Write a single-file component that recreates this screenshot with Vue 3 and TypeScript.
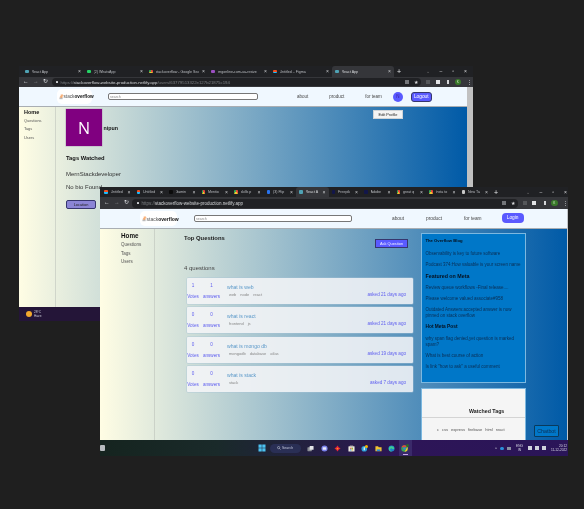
<template>
  <div class="desktop">
    <!-- back window: profile page -->
    <section class="window back">
      <div class="tabstrip">
        <div v-for="tab in backTabs" :key="tab.id" :class="['tab', { active: tab.active }]" :style="{ width: tab.width + 'px' }">
          <i class="favicon" :style="{ background: tab.color }"></i>
          <span class="tab-title">{{ tab.title }}</span>
          <span class="tab-close">×</span>
        </div>
        <span class="tab-plus">+</span>
        <div class="win-controls">
          <span>⌄</span><span>–</span><span>▫</span><span>×</span>
        </div>
      </div>
      <div class="toolbar">
        <div class="nav-btns"><span>←</span><span class="dim">→</span><span>↻</span></div>
        <div class="address">
          <i class="lock"></i>
          <span class="scheme">https://</span><span class="host">stackoverflow-website-production.netlify.app</span><span class="scheme">/users/63779513322e127b21875c194</span>
          <div class="addr-icons"><i class="mini share"></i><span class="star">★</span></div>
        </div>
        <div class="ext-icons">
          <i class="mini dark"></i><i class="mini puzzle"></i><i class="mini panel"></i><i class="profile">K</i><span class="dots">⋮</span>
        </div>
      </div>
      <div class="page">
        <header class="site-header">
          <div class="logo">
            <svg viewBox="0 0 10 14" class="logo-mark"><path d="M1 9h7v4H1z" fill="#bcbbbb" /><path d="M2 8l5 1M2.6 6l5 2M4 3.6l4.4 3M6 1.6l3.4 4.4" stroke="#f48024" stroke-width="1.4" /></svg>
            <span>stack<b>overflow</b></span>
          </div>
          <input class="search" placeholder="search" />
          <nav class="site-nav"><a>about</a><a>product</a><a>for team</a></nav>
          <span class="avatar-mini">N</span>
          <button class="auth-btn logout">Logout</button>
        </header>
        <div class="content">
          <aside class="side">
            <strong>Home</strong>
            <a>Questions</a><a>Tags</a><a>Users</a>
          </aside>
          <main class="profile-main">
            <div class="profile-top">
              <div class="avatar">N</div>
              <b class="username">nipun</b>
              <button class="edit-btn">Edit Profile</button>
            </div>
            <h4>Tags Watched</h4>
            <p class="tag-name">MernStackdeveloper</p>
            <p class="bio">No bio Found</p>
            <button class="location-btn">Location</button>
          </main>
        </div>
      </div>
      <div class="scrollbar"></div>
    </section>
    <div class="back-taskbar">
      <i class="sun"></i>
      <div class="weather"><span>28°C</span><span>Haze</span></div>
    </div>

    <!-- front window: questions page -->
    <section class="window front">
      <div class="tabstrip">
        <div v-for="tab in frontTabs" :key="tab.id" :class="['tab', { active: tab.active }]" :style="{ width: '32.5px' }">
          <i class="favicon" :style="{ background: tab.color }"></i>
          <span class="tab-title">{{ tab.title }}</span>
          <span class="tab-close">×</span>
        </div>
        <span class="tab-plus">+</span>
        <div class="win-controls">
          <span>⌄</span><span>–</span><span>▫</span><span>×</span>
        </div>
      </div>
      <div class="toolbar">
        <div class="nav-btns"><span>←</span><span class="dim">→</span><span>↻</span></div>
        <div class="address">
          <i class="lock"></i>
          <span class="scheme">https://</span><span class="host">stackoverflow-website-production.netlify.app</span>
          <div class="addr-icons"><i class="mini share"></i><span class="star">★</span></div>
        </div>
        <div class="ext-icons">
          <i class="mini dark"></i><i class="mini puzzle"></i><i class="mini panel"></i><i class="profile">K</i><span class="dots">⋮</span>
        </div>
      </div>
      <div class="page">
        <header class="site-header">
          <div class="logo">
            <svg viewBox="0 0 10 14" class="logo-mark"><path d="M1 9h7v4H1z" fill="#bcbbbb" /><path d="M2 8l5 1M2.6 6l5 2M4 3.6l4.4 3M6 1.6l3.4 4.4" stroke="#f48024" stroke-width="1.4" /></svg>
            <span>stack<b>overflow</b></span>
          </div>
          <input class="search" placeholder="search" />
          <nav class="site-nav"><a>about</a><a>product</a><a>for team</a></nav>
          <button class="auth-btn login">Login</button>
        </header>
        <div class="content">
          <aside class="side">
            <strong>Home</strong>
            <a>Questions</a><a>Tags</a><a>Users</a>
          </aside>
          <main class="questions">
            <div class="q-head">
              <h3>Top Questions</h3>
              <button class="ask-btn">Ask Question</button>
            </div>
            <p class="q-count">4 questions</p>
            <div v-for="q in questions" :key="q.title" class="q-card">
              <div class="q-stat"><span>{{ q.votes }}</span><span>Votes</span></div>
              <div class="q-stat answers"><span>{{ q.answers }}</span><span>answers</span></div>
              <div class="q-body">
                <a class="q-title">{{ q.title }}</a>
                <div class="q-foot">
                  <div class="q-tags"><span v-for="t in q.tags" :key="t">{{ t }}</span></div>
                  <span class="q-asked">asked {{ q.asked }} days ago</span>
                </div>
              </div>
            </div>
          </main>
          <aside class="right-col">
            <div class="blog">
              <b class="blog-first">The Overflow Blog</b>
              <p>Observability is key to future software</p>
              <p>Podcast 374:How valuable is your screen name</p>
              <h5>Featured on Meta</h5>
              <p>Review queue workflows -Final release....</p>
              <p>Please welcome valued associate#958</p>
              <p>Outdated Answers:accepted answer is now pinned on stack overflow</p>
              <b class="blog-hot">Hot Meta Post</b>
              <p>why span flag denied,yet question is marked spam?</p>
              <p>What is best course of action</p>
              <p>Is link "how to ask" a useful comment</p>
            </div>
            <div class="watched">
              <h4>Watched Tags</h4>
              <div class="watched-tags"><span v-for="t in watchedTags" :key="t">{{ t }}</span></div>
            </div>
          </aside>
        </div>
        <button class="chatbot">Chatbot</button>
      </div>
      <div class="taskbar">
        <i class="widget-icon"></i>
        <div class="task-center">
          <svg viewBox="0 0 16 16" class="win-logo"><path d="M1 1h6.500v6.500H1zM8.500 1H15v6.500H8.500zM1 8.500h6.500V15H1zM8.500 8.500H15V15H8.500z" fill="#4cc2f1" /></svg>
          <div class="task-search"><svg viewBox="0 0 10 10"><circle cx="4" cy="4" r="2.800" fill="none" stroke="#dfe3ee" stroke-width="1.200" /><path d="M6 6l3 3" stroke="#dfe3ee" stroke-width="1.200" /></svg><span>Search</span></div>
          <!-- task view -->
          <svg viewBox="0 0 16 16" class="task-app"><rect x="1" y="5" width="10" height="9" rx="1" fill="#8c8f96" /><rect x="6" y="2" width="9" height="9" rx="1" fill="#e4e5e8" /></svg>
          <!-- chat -->
          <svg viewBox="0 0 16 16" class="task-app"><circle cx="8" cy="8" r="7" fill="#7b83eb" /><rect x="4" y="5" width="8" height="6" rx="1.500" fill="#e8e9fb" /></svg>
          <!-- red app -->
          <svg viewBox="0 0 16 16" class="task-app"><path d="M8 1l3 4 4 3-4 3-3 4-3-4-4-3 4-3z" fill="#e8223a" /><circle cx="8" cy="8" r="2" fill="#f7a21b" /></svg>
          <!-- store -->
          <svg viewBox="0 0 16 16" class="task-app"><rect x="1" y="3" width="14" height="12" rx="1" fill="#ece9df" /><path d="M5 1.500h6V4H5z" fill="none" stroke="#c8c4b6" /><path d="M5 6h3v3H5z" fill="#e8553c" /><path d="M8.500 6h3v3h-3z" fill="#7cb342" /><path d="M5 9.500h3v3H5z" fill="#2b9fd8" /><path d="M8.500 9.500h3v3h-3z" fill="#f4c430" /></svg>
          <!-- browser with badge -->
          <svg viewBox="0 0 16 16" class="task-app"><circle cx="7.500" cy="8.500" r="6.500" fill="#2b9fd8" /><path d="M6 5h3v7H6z" fill="#dff1fa" /><circle cx="12.500" cy="3.500" r="3.500" fill="#f4b400" /></svg>
          <!-- folder -->
          <svg viewBox="0 0 16 16" class="task-app"><path d="M1 3h6l1.500 2H15v9H1z" fill="#f4c430" /><path d="M4 10h8v4H4z" fill="#2f8fd0" /></svg>
          <!-- edge -->
          <svg viewBox="0 0 16 16" class="task-app"><circle cx="8" cy="8" r="7" fill="#1d84c9" /><path d="M2 10a6 6 0 0 1 12-2c0 2-5 2-5 0a3 3 0 0 0-4 4 5 5 0 0 0 5 3 7 7 0 0 1-8-5z" fill="#3fd08f" /></svg>
          <div class="chrome-app">
            <svg viewBox="0 0 16 16"><circle cx="7" cy="9" r="6.500" fill="#34a853" /><path d="M7 2.500A6.500 6.500 0 0 1 12.600 5.800H7A3.200 3.200 0 0 0 4.200 7.600L1.600 5.400A6.500 6.500 0 0 1 7 2.500z" fill="#e8453c" /><path d="M12.600 5.800A6.500 6.500 0 0 1 7 15.500l2.800-4.900 2.800-4.800z" fill="#f4c430" /><circle cx="7" cy="9" r="2.600" fill="#3f7fd8" /><circle cx="13" cy="3" r="3" fill="#2f6a2a" /></svg>
            <i class="running"></i>
          </div>
        </div>
        <div class="tray">
          <span class="tray-chev">^</span>
          <i class="tray-cloud"></i><i class="tray-drive"></i>
          <div class="tray-lang"><span>ENG</span><span>IN</span></div>
          <i class="tray-ico"></i><i class="tray-ico"></i><i class="tray-ico"></i>
          <div class="tray-clock"><span>20:12</span><span>11-12-2022</span></div>
        </div>
      </div>
    </section>
  </div>
</template>

<script setup lang="ts">
const chromeIcon = 'conic-gradient(#e8453c 0 33%, #f4c430 33% 66%, #34a853 66%)'

const backTabs = [
  { id: 1, title: 'React App', color: '#4fa3b5', width: 62, active: false },
  { id: 2, title: '(2) WhatsApp', color: '#25d366', width: 62, active: false },
  { id: 3, title: 'stackoverflow - Google Sea', color: chromeIcon, width: 62, active: false },
  { id: 4, title: 'imgonline-com-ua-resize', color: '#9b4fc2', width: 62, active: false },
  { id: 5, title: 'Untitled – Figma', color: 'linear-gradient(#f24e1e 50%, #1abcfe 50%)', width: 62, active: false },
  { id: 6, title: 'React App', color: '#4fa3b5', width: 62, active: true },
]

const frontTabs = [
  { id: 1, title: 'Untitled', color: 'linear-gradient(#f24e1e 50%, #1abcfe 50%)', active: false },
  { id: 2, title: 'Untitled', color: 'linear-gradient(#f24e1e 50%, #1abcfe 50%)', active: false },
  { id: 3, title: 'Gamin', color: '#0b0b0b', active: false },
  { id: 4, title: 'Mentio', color: chromeIcon, active: false },
  { id: 5, title: 'skills p', color: chromeIcon, active: false },
  { id: 6, title: '(3) Flip', color: '#2874f0', active: false },
  { id: 7, title: 'React A', color: '#4fa3b5', active: true },
  { id: 8, title: 'Freepik', color: '#12164a', active: false },
  { id: 9, title: 'Adobe', color: '#12164a', active: false },
  { id: 10, title: 'great q', color: chromeIcon, active: false },
  { id: 11, title: 'Insta to', color: chromeIcon, active: false },
  { id: 12, title: 'New Ta', color: '#c8c8c8', active: false },
]

const questions = [
  { title: 'what is web', votes: 1, answers: 1, tags: ['web', 'node', 'react'], asked: 21 },
  { title: 'what is react', votes: 0, answers: 0, tags: ['frontend', 'js'], asked: 21 },
  { title: 'what is mongo db', votes: 0, answers: 0, tags: ['mongodb', 'database', 'atlas'], asked: 19 },
  { title: 'what is stack', votes: 0, answers: 0, tags: ['stack'], asked: 7 },
]

const watchedTags = ['c', 'css', 'express', 'firebase', 'html', 'react']
</script>

<style>
html, body { margin: 0; background: #1f1f1f; }
</style>

<style scoped>
.desktop { position: relative; width: 584px; height: 509px; background: #1f1f1f; overflow: hidden; font-family: "Liberation Sans", Arial, sans-serif; color: #222; filter: blur(0.3px); }
.window { position: absolute; display: flex; flex-direction: column; overflow: hidden; }
.back { left: 19px; top: 66px; width: 454px; height: 241px; }
.front { left: 100px; top: 187px; width: 468px; height: 269px; }

/* browser chrome */
.tabstrip { display: flex; align-items: flex-end; height: 11px; background: #202124; padding-left: 3px; flex: none; }
.front .tabstrip { height: 10px; padding-left: 1px; }
.tab { display: flex; align-items: center; gap: 3px; height: 100%; padding: 0 3px; box-sizing: border-box; font-size: 3.600px; color: #b9bcc0; }
.tab.active { background: #35363a; border-radius: 3px 3px 0 0; color: #d5d7da; }
.favicon { width: 3.500px; height: 3.500px; border-radius: 1px; flex: none; }
.tab-title { flex: 1; white-space: nowrap; overflow: hidden; }
.tab-close { font-size: 5px; line-height: 1; color: #c8cacd; }
.tab-plus { margin-left: 3px; align-self: center; color: #e8eaed; font-size: 7px; line-height: 1; }
.win-controls { margin-left: auto; display: flex; align-self: center; gap: 10px; padding-right: 6px; color: #d8d9db; font-size: 5px; line-height: 1; }
.front .win-controls { padding-right: 1px; }
.win-controls span:first-child { color: #777; }
.toolbar { display: flex; align-items: center; height: 10px; background: #35363a; flex: none; }
.front .toolbar { height: 12px; }
.nav-btns { display: flex; gap: 4.500px; padding-left: 4px; color: #dfe1e4; font-size: 5.500px; line-height: 1; }
.nav-btns .dim { color: #85878a; }
.address { display: flex; align-items: center; margin-left: 4px; width: 369px; height: 7.500px; border-radius: 4px; background: #202124; font-size: 4.300px; white-space: nowrap; padding-left: 4px; box-sizing: border-box; }
.front .address { width: 390px; margin-left: 3px; height: 9px; padding-left: 5px; font-size: 4.500px; }
.lock { width: 2px; height: 2.500px; background: #cfd1d4; margin-right: 2.500px; border-radius: 0.500px; }
.scheme { color: #7d8084; }
.host { color: #d5d7da; }
.addr-icons { margin-left: auto; display: flex; align-items: center; gap: 5px; padding-right: 3px; }
.star { color: #d8d9db; font-size: 5px; line-height: 1; }
.mini { display: block; width: 4px; height: 4px; background: #7b7d80; }
.mini.share { background: #74767a; }
.mini.dark { background: #55575a; }
.mini.puzzle { background: #e3e4e6; }
.mini.panel { background: #d5d6d8; box-shadow: inset 2px 0 0 #35363a; }
.ext-icons { display: flex; align-items: center; gap: 5.500px; margin-left: 5px; }
.profile { display: flex; align-items: center; justify-content: center; width: 6.500px; height: 6.500px; border-radius: 50%; background: #3a7a2a; color: #cfe8c6; font-size: 3px; font-style: normal; }
.dots { color: #d8d9db; font-size: 5px; line-height: 1; }

/* site */
.page { position: relative; flex: 1; display: flex; flex-direction: column; min-height: 0; background: linear-gradient(to right, #fffde4, #005aa7); }
.back .page { margin-right: 6px; }
.front .page { border-right: 1px solid #c4c6c9; }
.scrollbar { position: absolute; right: 0; top: 21px; bottom: 0; width: 6px; background: #c1c1c1; }
.site-header { display: flex; align-items: center; height: 19px; background: #f0f8ff; border-bottom: 1px solid #a9aeb3; flex: none; box-sizing: content-box; }
.back .site-header { padding-left: 38px; }
.front .site-header { height: 19px; padding-left: 40px; }
.logo { display: flex; align-items: center; background: #fff; border-radius: 5px; height: 15px; width: 35px; padding-left: 2px; box-sizing: border-box; font-size: 4.700px; color: #555; }
.front .logo { width: 37px; font-size: 5px; }
.logo b { color: #111; font-weight: 700; }
.logo-mark { width: 4.500px; height: 7px; flex: none; }
.search { box-sizing: border-box; width: 150px; height: 7px; margin-left: 16px; padding: 0 1px; border: 0.700px solid #777; border-radius: 2px; background: #fff; font-size: 3.600px; font-family: inherit; outline: none; }
.front .search { width: 158px; margin-left: 17px; }
.search::placeholder { color: #8a8a8a; }
.site-nav { display: flex; margin-left: 39px; gap: 21px; font-size: 4.500px; color: #444; }
.front .site-nav { margin-left: 40px; gap: 22px; font-size: 4.800px; }
.avatar-mini { display: flex; align-items: center; justify-content: center; width: 10px; height: 10px; margin-left: 11px; border-radius: 50%; background: #5a5aff; color: #3a1a9a; font-size: 4.500px; }
.auth-btn { border: none; color: #fff; font-family: inherit; padding: 0; background: #5a5aff; }
.logout { width: 21px; height: 10px; margin-left: 8px; border: 0.700px solid #36366e; border-radius: 3px; font-size: 4.800px; }
.login { width: 22px; height: 10px; margin-left: 20px; margin-bottom: 2px; border-radius: 4px; font-size: 4.800px; }
.content { flex: 1; display: flex; min-height: 0; }
.side { display: flex; flex-direction: column; gap: 3.200px; width: 37px; padding: 2px 0 0 5px; box-sizing: border-box; border-right: 1px solid rgba(170, 175, 170, 0.4); font-size: 3.900px; color: #555; flex: none; }
.side strong { font-size: 5.500px; color: #111; line-height: 6px; }
.front .side { width: 55px; padding: 3.500px 0 0 21px; gap: 3.500px; font-size: 4.500px; }
.front .side strong { font-size: 6.300px; }

/* profile */
.profile-main { flex: 1; padding: 2px 0 0 10px; font-size: 5.500px; position: relative; }
.profile-top { display: flex; align-items: center; }
.avatar { display: flex; align-items: center; justify-content: center; width: 36px; height: 37px; background: #800080; color: #fff; font-size: 16px; font-family: "Open Sans", sans-serif; box-shadow: 0 0 0 0.500px #b9a9c0; }
.username { margin-left: 1.500px; font-size: 5.300px; color: #111; }
.edit-btn { position: absolute; left: 317px; top: 3px; width: 30px; height: 9px; padding: 0; background: #f4f4f4; border: 0.800px solid #cfd4d8; font-size: 3.900px; font-family: inherit; color: #222; }
.profile-main h4 { margin: 8.500px 0 0; font-size: 5.800px; line-height: 7px; color: #111; }
.tag-name { margin: 9px 0 0; font-size: 6px; line-height: 7px; color: #333; }
.bio { margin: 6px 0 0; font-size: 6px; line-height: 7px; color: #333; }
.location-btn { display: block; margin-top: 9.500px; width: 30px; height: 9px; padding: 0; background: #8b85d6; border: 0.800px solid #36366e; border-radius: 2px; font-size: 3.900px; font-family: inherit; color: #222; }

/* questions */
.questions { width: 259px; padding: 5px 0 0 29px; box-sizing: border-box; flex: none; }
.q-head { display: flex; justify-content: space-between; align-items: flex-start; padding-right: 6px; }
.q-head h3 { margin: 0; font-size: 5.900px; line-height: 8px; color: #1a1a1a; }
.ask-btn { width: 33px; height: 9px; margin-top: 5px; padding: 0; background: #5a5aff; border: 0.800px solid #36366e; color: #f0f0ff; font-size: 3.900px; font-family: inherit; }
.q-count { margin: 16px 0 0; font-size: 6px; line-height: 8px; color: #444; }
.q-card { display: flex; height: 26px; margin: 0 0 3.300px 3px; width: 226px; box-sizing: border-box; border-radius: 1px; background: rgba(246, 246, 248, 0.86); box-shadow: 0 0 0 0.500px rgba(170, 195, 215, 0.7); }
.q-count + .q-card { margin-top: 6px; }
.q-stat { display: flex; flex-direction: column; align-items: center; justify-content: space-between; padding: 5px 0 5px; width: 12px; font-size: 4.600px; color: #6060f0; }
.q-stat.answers { width: 17px; margin-left: 4px; }
.q-body { flex: 1; display: flex; flex-direction: column; padding: 6px 7px 0 7px; }
.q-title { font-size: 5.100px; line-height: 6px; color: #5a98c9; }
.q-foot { display: flex; justify-content: space-between; align-items: center; margin-top: 2px; }
.q-tags { display: flex; gap: 4px; padding-left: 2px; font-size: 4px; color: #888; }
.q-asked { font-size: 4.600px; color: #6060f0; }

/* right column */
.right-col { display: flex; flex-direction: column; gap: 5px; margin-left: 7px; width: 105px; padding-top: 4px; flex: none; }
.blog { height: 150px; padding: 4px 3.500px 0; box-sizing: border-box; background: #0077c8; border: 0.700px solid #7cb8e0; color: #0a2f55; font-size: 4.500px; line-height: 6px; }
.blog b { display: block; color: #05101e; }
.blog p { margin: 0 0 5px; }
.blog .blog-first { font-size: 4.200px; margin-bottom: 7px; }
.blog h5 { margin: 0 0 6px; font-size: 5.300px; line-height: 6px; color: #05101e; }
.blog .blog-hot { font-size: 4.800px; margin-bottom: 6px; }
.watched { flex: 1; display: flex; flex-direction: column; background: #f5f5f5; border: 0.700px solid #7cb8e0; border-bottom: none; min-height: 0; }
.watched h4 { margin: 0; padding: 19px 0 3px 47px; font-size: 5.300px; line-height: 6px; color: #222; border-bottom: 0.700px solid #d4d4d4; }
.watched-tags { display: flex; gap: 3px; padding: 9px 0 0 15px; font-size: 4px; color: #555; }
.chatbot { position: absolute; right: 8px; bottom: 3px; width: 25px; height: 12px; padding: 0; background: #0077c8; border: 0.800px solid #0a3a5c; border-radius: 1px; color: #0a2f55; font-size: 5.300px; font-family: inherit; }

/* taskbars */
.taskbar { display: flex; align-items: center; height: 16px; flex: none; position: relative; background: linear-gradient(to right, #15241f, #1a2a2a 25%, #2d1557 65%, #2a1558); }
.widget-icon { width: 5px; height: 6px; background: #b8bcc0; border-radius: 1px; }
.task-center { position: absolute; left: 158px; top: 0; height: 100%; display: flex; align-items: center; gap: 6.500px; }
.win-logo { width: 8px; height: 8px; }
.task-search { display: flex; align-items: center; gap: 1.500px; width: 31px; height: 9px; padding-left: 7px; margin-left: -3px; box-sizing: border-box; border-radius: 5px; background: #2a2f55; color: #c8cce0; font-size: 3.500px; }
.task-search svg { width: 4px; height: 4px; }
.task-app { display: block; width: 7px; height: 7px; flex: none; }
.chrome-app { position: relative; display: flex; align-items: center; justify-content: center; width: 13px; height: 16px; margin-left: -3px; background: #3a2a6a; }
.chrome-app svg { width: 8px; height: 8px; }
.running { position: absolute; left: 4px; bottom: 1px; width: 5px; height: 1px; background: #c9a9e8; }
.tray { position: absolute; right: 1px; top: 0; height: 100%; display: flex; align-items: center; gap: 3px; color: #d8d9e6; font-size: 3.200px; }
.tray-chev { font-size: 4px; }
.tray-cloud { width: 4px; height: 3px; background: #2b8fd8; border-radius: 2px; }
.tray-drive { width: 4px; height: 3px; background: #8a8fa0; margin-right: 2px; }
.tray-lang { display: flex; flex-direction: column; align-items: center; margin-right: 2px; line-height: 4.500px; }
.tray-ico { width: 4px; height: 3.500px; background: #d0d2dc; }
.tray-clock { display: flex; flex-direction: column; align-items: flex-end; margin-left: 2px; line-height: 4.500px; }
.back-taskbar { position: absolute; left: 19px; top: 307px; width: 81px; height: 14px; display: flex; align-items: center; gap: 2px; padding-left: 7px; box-sizing: border-box; background: #241538; color: #c9c9d6; font-size: 3.200px; }
.sun { width: 6px; height: 6px; border-radius: 50%; background: #f3a92e; }
.weather { display: flex; flex-direction: column; line-height: 4.500px; }
</style>
